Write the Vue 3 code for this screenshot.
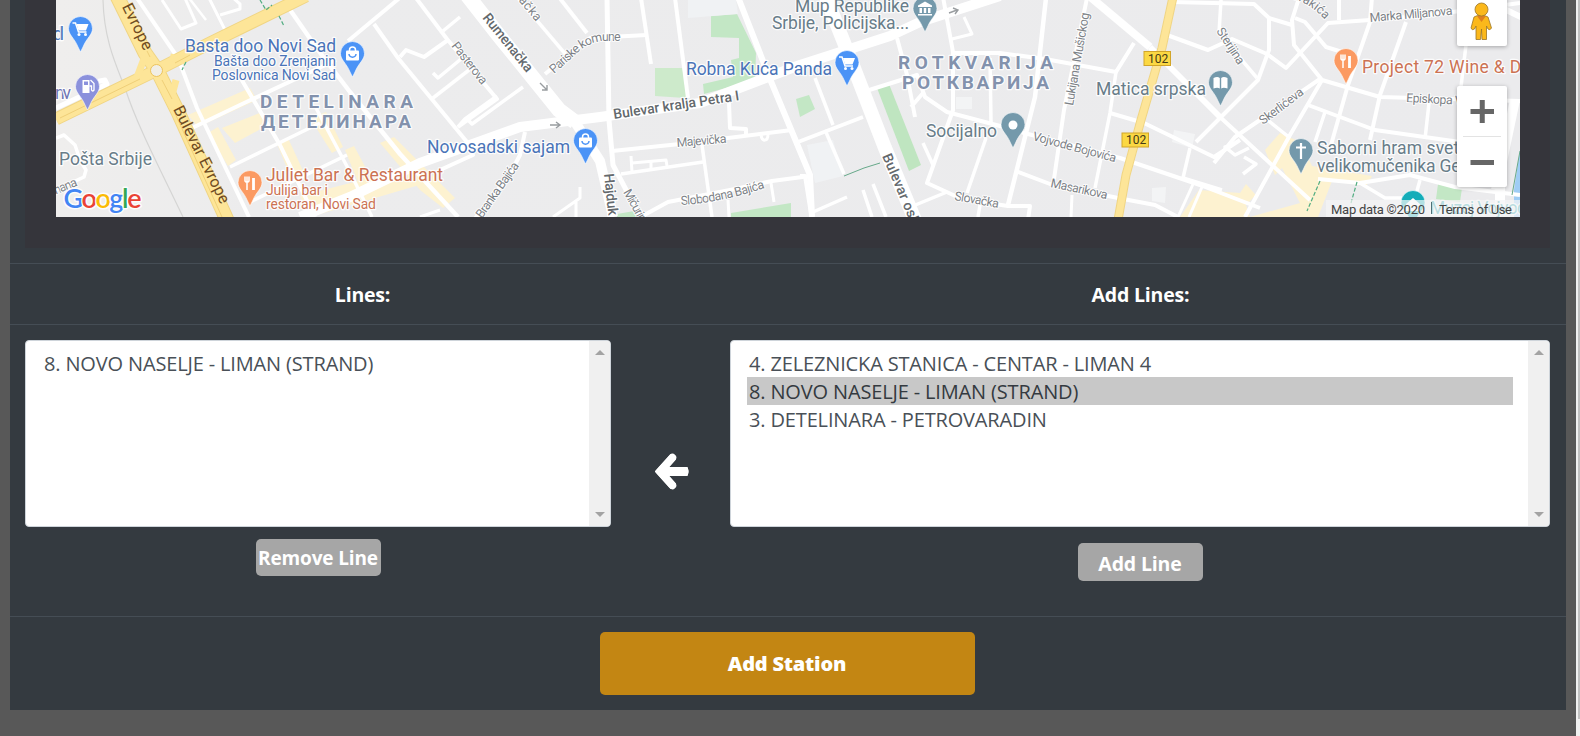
<script setup>
const buildings = [
  ['#fdf2d0', 'M188 115 L250 88 L257 100 L198 127Z'],
  ['#fdf2d0', 'M208 133 L218 127 L236 160 L228 166Z'],
  ['#fdf2d0', 'M222 128 L262 112 L268 125 L235 143Z'],
  ['#fdf2d0', 'M277 144 L288 138 L305 175 L292 180Z'],
  ['#fdf2d0', 'M310 118 L326 112 L343 147 L332 153Z'],
  ['#fdf2d0', 'M380 143 L394 137 L455 198 L443 208 L420 190Z'],
  ['#fdf2d0', 'M300 196 L420 165 L433 181 L310 217Z'],
  ['#fdf2d0', 'M345 150 L354 146 L375 185 L362 192Z'],
  ['#fdf2d0', 'M1265 150 L1280 133 L1300 142 L1312 166 L1372 176 L1366 186 L1332 181 L1318 217 L1180 217 L1199 190 L1240 193 L1246 184 L1262 202 L1277 180Z'],
  ['#ebebed', 'M1282 168 L1300 203 L1250 217 L1246 205Z'],
  ['#c3e7c5', 'M711 16 L737 14 L756 53 L755 80 L704 94 L703 84 L733 77 L731 60 L739 58 L739 38 L711 37Z'],
  ['#cdeacb', 'M655 68 L685 68 L689 93 L685 98 L655 96Z'],
  ['#c3e7c5', 'M796 99 L809 95 L815 109 L800 117Z'],
  ['#bfe5c0', 'M877 88 L889 84 L921 165 L909 171Z'],
  ['#c3e7c5', 'M731 213 L791 203 L791 217 L731 217Z'],
  ['#c3e7c5', 'M617 214 L640 210 L638 217 L617 217Z'],
  ['#c3e7c5', 'M1438 184 L1462 188 L1460 202 L1436 199Z'],
  ['#f0f2f4', 'M688 0 L736 0 L738 14 L688 18Z'],
  ['#f0f2f4', 'M807 145 L833 140 L843 176 L815 183Z'],
  ['#f3f4f5', 'M956 97 L972 97 L972 109 L956 109Z'],
  ['#f3f4f5', 'M1152 188 L1166 187 L1165 203 L1152 201Z'],
  ['#f3f4f5', 'M1174 130 L1195 134 L1192 148 L1172 142Z'],
  ['#9fcdf5', 'M1520 150 L1514 190 L1514 217 L1520 217Z'],
]

// [width, path]
const roads = [
  [4, 'M137 -2 L178 58 L197 108 L249 217'],
  [3, 'M162 0 L181 29 L196 23 L184 -4'],
  [2.5, 'M189 -2 L206 20'], [3, 'M208 -4 L227 34'],
  [3, 'M220 15 L240 9 L240 4 L232 -3'],
  [4.5, 'M286 4 L318 50 L350 92 L400 154 L458 217'],
  [4, 'M402 -4 L348 41'], [4, 'M374 24 L398 58 L467 142 L473 155 L440 170'],
  [4, 'M190 129 L240 105 L336 60'], [3.5, 'M230 167 L320 123'],
  [3.5, 'M250 202 L347 155'], [4, 'M240 77 L280 145 L315 217'],
  [3.5, 'M316 108 L350 172 L372 217'], [3.5, 'M56 138 L64 135 L75 145 L80 160 L86 170 L84 177 L56 190'],
  [5, 'M56 108 L107 84 L105 80 L95 82'],
  [10, 'M300 217 L350 197 L420 163 L520 127 L600 117 L700 103 L800 65 L890 36 L920 22 L1000 -4'],
  [15, 'M467 -5 L500 37 L559 110 L575 122'],
  [10, 'M575 122 L600 161 L613 217'],
  [4, 'M416 -2 L447 39 L497 99 L458 127'], [3.5, 'M460 17 L443 31'],
  [4, 'M448 40 L424 57 L406 50 L400 57'],
  [3.5, 'M433 73 L438 78 L461 59'], [3.5, 'M433 98 L469 70'],
  [3.5, 'M458 127 L465 119 L497 96 M467 119 L472 124 L523 87'],
  [3.5, 'M517 -3 L567 56'], [4, 'M558 -4 L587 33'],
  [4, 'M545 74 L590 38 L647 35'], [4, 'M641 -2 L651 64'],
  [5, 'M607 -2 L609 120 L613 165 L642 220'], [4, 'M675 -2 L688 98'],
  [6, 'M738 -3 L770 79 L810 175 L812 217'],
  [4, 'M729 103 L730 128 L746 129 L746 134'], [4, 'M612 151 L680 144 L792 130'],
  [3.5, 'M621 174 L703 162'], [3.5, 'M702 145 L712 217'],
  [3, 'M631 156 L632 172 M632 163 L666 160 L667 166 M651 162 L651 168'],
  [4, 'M637 219 L668 202 L730 190 L772 181 L810 176'], [3, 'M771 183 L774 202 M728 200 L729 217'],
  [3, 'M761 135 C762 142 768 142 768 134'],
  [4, 'M525 132 L520 155 L510 174 L470 225'], [3, 'M580 187 L580 198 L553 217 M576 202 L576 217 M440 210 L420 217'],
  [14, 'M825 -5 L847 50 L885 148 L915 220'],
  [4, 'M943 -3 L953 52 L953 110 L927 183 L962 199 L1008 206 L1030 206 L1028 220'],
  [3, 'M964 17 L972 34 L952 39'], [4.5, 'M1046 -2 L1035 97 L1008 205'],
  [4, 'M952 53 L1000 53 L1045 59 L1116 72 L1134 43'],
  [4, 'M897 38 L907 75 L915 117 M911 107 L923 93'], [4, 'M866 91 L917 75 L925 97 L947 112 L1000 126 L1028 134 L1120 158 L1200 185 L1260 208'],
  [3.5, 'M990 58 L991 122'], [3.5, 'M986 138 L967 193'], [3.5, 'M923 143 L933 165 M980 205 L978 217'],
  [4, 'M1087 -2 L1064 110 L1054 179'], [8, 'M1088 -5 L1150 47'], [6, 'M1150 47 L1220 117'], [4, 'M1220 117 L1310 200'],
  [3.5, 'M1116 72 L1110 113 L1095 188'], [4, 'M1110 113 L1144 123 L1214 157 L1240 140'],
  [4, 'M1016 171 L1050 184 L1118 198 L1155 205 L1178 217'],
  [3.5, 'M1190 148 L1183 178 L1222 190'], [3, 'M1194 182 L1178 217 M1202 187 L1189 217'],
  [4, 'M1167 35 L1208 50 L1232 39 L1267 54 L1286 68 L1328 23 L1370 20 L1430 15 L1520 3'],
  [4, 'M798 142 L863 117'], [3.5, 'M815 78 L833 125 M825 130 L844 174'], [4, 'M800 176 L805 176 L812 220'],
  [3.5, 'M813 212 L847 197 M863 190 L872 217 M873 184 L886 217 M908 208 L947 192'],
  [3, 'M1072 195 L1071 217'],
  [4, 'M1172 2 L1254 4 L1269 18 L1292 25'], [3.5, 'M1221 0 L1219 33 L1257 78'],
  [4, 'M1269 18 L1269 50 L1258 80 L1210 128 L1196 142'],
  [4, 'M1299 -2 L1292 20 L1294 45 L1322 80 L1380 97 L1520 101'],
  [4, 'M1295 18 L1305 22 L1326 47 L1352 55'],
  [4, 'M1322 80 L1290 135 L1245 217'], [4, 'M1320 79 L1235 137 L1214 163'],
  [4, 'M1370 22 L1348 85 L1331 145'], [4, 'M1406 22 L1380 95 L1370 140'],
  [4, 'M1339 -3 L1339 20 M1372 -3 L1370 22'],
  [4, 'M1308 105 L1375 130 L1460 142'], [3.5, 'M1429 103 L1425 139 M1466 45 L1460 95'],
  [3.5, 'M1325 112 L1315 142 M1265 118 L1290 138'],
  [3.5, 'M1232 146 L1225 147 L1235 155 L1249 148'],
  [4, 'M1318 179 L1360 183 L1410 175 L1455 187 L1520 195'], [3.5, 'M1360 183 L1385 198 L1415 198 L1420 180'],
  [3.5, 'M1244 157 L1256 164 L1243 174'],
  [10, 'M1496 190 L1515 100 M1500 210 L1500 170'], [6, 'M1496 5 L1525 19'],
]

const pins = [
  { x: 80.5, y: 29, c: '#4b93f6', k: 'cart' },
  { x: 87.5, y: 87, c: '#8b91dc', k: 'gas' },
  { x: 352.5, y: 54, c: '#4b93f6', k: 'bag' },
  { x: 250, y: 183, c: '#fb9a62', k: 'food' },
  { x: 585.5, y: 141, c: '#4b93f6', k: 'bag' },
  { x: 925, y: 9, c: '#7499ab', k: 'museum' },
  { x: 847, y: 63, c: '#4b93f6', k: 'cart' },
  { x: 1013, y: 125, c: '#7499ab', k: 'dot' },
  { x: 1220.5, y: 83, c: '#7499ab', k: 'book' },
  { x: 1346, y: 61, c: '#fb9a62', k: 'food' },
  { x: 1301, y: 151, c: '#7499ab', k: 'cross' },
  { x: 1413, y: 203, c: '#14adb9', k: 'home' },
]

// [class, text, x, baseline, length, rotation]
const labels = [
  ['poi blue', 'dl', 53, 40, 11, 0],
  ['poi violet', 'nv', 55, 99, 16, 0],
  ['poi blue', 'Basta doo Novi Sad', 185, 52, 151, 0],
  ['sub blue', 'Bašta doo Zrenjanin', 214, 66, 122, 0],
  ['sub blue', 'Poslovnica Novi Sad', 212, 80, 124, 0],
  ['area', 'DETELINARA', 260, 108, 153, 0],
  ['area', 'ДЕТЕЛИНАРА', 261, 128, 150, 0],
  ['poi grey', 'Pošta Srbije', 59, 165, 93, 0],
  ['street', 'mana', 52, 196, 28, -22],
  ['poi orange', 'Juliet Bar & Restaurant', 266, 181, 177, 0],
  ['sub orange', 'Julija bar i', 266, 195, 62, 0],
  ['sub orange', 'restoran, Novi Sad', 266, 209, 110, 0],
  ['poi blue', 'Novosadski sajam', 427, 153, 143, 0],
  ['avenue', 'Bulevar Evrope', 173, 109, 107, 63.5],
  ['avenue', 'Bulevar Evrope', 95, -47, 110, 63.5],
  ['road', 'Rumenačka', 482, 18, 71, 51],
  ['street', 'Pasterova', 451, 46, 50, 52],
  ['street', 'Kisačka', 506, -14, 47, 50],
  ['road', 'Bulevar kralja Petra I', 614, 119, 127, -8.5],
  ['street', 'Majevička', 677, 147, 50, -5],
  ['street', 'Branka Bajića', 482, 219, 65, -55],
  ['road', 'Hajduk', 604, 174, 42, 84],
  ['street', 'Mičurinova', 623, 192, 52, 61],
  ['poi grey', 'Mup Republike', 795, 12, 114, 0],
  ['poi grey', 'Srbije, Policijska...', 772, 29, 137, 0],
  ['poi blue', 'Robna Kuća Panda', 686, 75, 146, 0],
  ['area', 'ROTKVARIJA', 898, 69, 155, 0],
  ['area', 'РОТКВАРИЈА', 902, 89, 147, 0],
  ['poi grey', 'Socijalno', 926, 137, 71, 0],
  ['street', 'Vojvode Bojovića', 1032, 140, 86, 15],
  ['street', 'Masarikova', 1050, 187, 58, 12],
  ['street', 'Slovačka', 954, 200, 45, 10],
  ['road', 'Bulevar oslob', 882, 156, 88, 67],
  ['street', 'Lukijana Mušickog', 1073, 106, 94, -80],
  ['poi grey', 'Matica srpska', 1096, 95, 110, 0],
  ['street', 'Sterijina', 1216, 31, 41, 57],
  ['street', 'Marka Miljanova', 1370, 22, 83, -5],
  ['street', 'Episkopa Visariona', 1406, 102, 96, 3],
  ['street', 'Skerlićeva', 1263, 125, 52, -37],
  ['poi orange', 'Project 72 Wine & Deli', 1362, 73, 178, 0],
  ['poi grey', 'Saborni hram svetog', 1317, 154, 162, 0],
  ['poi grey', 'velikomučenika Georgija', 1317, 172, 186, 0],
  ['poi teal', 'Muzej Vojvodine', 1430, 214, 118, 0],
]

const assigned = ['8. NOVO NASELJE - LIMAN (STRAND)']
const available = [
  '4. ZELEZNICKA STANICA - CENTAR - LIMAN 4',
  '8. NOVO NASELJE - LIMAN (STRAND)',
  '3. DETELINARA - PETROVARADIN',
]
const picked = 1
</script>

<template>
  <div class="page">
    <main class="card">
      <section class="map-row">
        <div class="map-frame">
          <svg class="map" viewBox="56 0 1464 217" width="1464" height="217">
            <defs>
              <linearGradient id="land" x1="0" x2="1" y1="0" y2="0">
                <stop offset="0" stop-color="#efeeed" />
                <stop offset="0.14" stop-color="#ececed" />
                <stop offset="1" stop-color="#ebebed" />
              </linearGradient>
              <path id="pariske" d="M554 74 L577 53 Q590 41 606 41 L630 41" />
              <path id="slobodana" d="M681 205 Q720 203 768 187" />
              <path id="karadz" d="M1278 -3 Q1306 -3 1327 22" />
            </defs>
            <rect x="56" y="0" width="1464" height="217" fill="url(#land)" />
            <path v-for="(b, i) in buildings" :key="'b' + i" :fill="b[0]" :d="b[1]" />
            <path class="rail" d="M103 0 C104 40 116 65 125 88 C137 125 158 165 183 217" />
            <path v-for="(r, i) in roads" :key="'r' + i" class="way" :stroke-width="r[0]" :d="r[1]" />

            <g class="main-edge">
              <path d="M56 119 L157 70 L210 43 L306 -4" stroke-width="13" />
              <path d="M115 -8 L145 53 L157 70 L178 112 L227 220" stroke-width="15" />
              <path d="M1173 -3 L1162 48 L1141 120 L1126 175 L1118 220" stroke-width="9" />
            </g>
            <g class="main-fill">
              <path d="M56 119 L157 70 L210 43 L306 -4" stroke-width="11" />
              <path d="M115 -8 L145 53 L157 70 L178 112 L227 220" stroke-width="13" />
              <path d="M1173 -3 L1162 48 L1141 120 L1126 175 L1118 220" stroke-width="7" />
              <path d="M136 80 L145 56 M170 57 L185 61 M176 80 L172 95" stroke-width="7" />
            </g>
            <path class="median" d="M60 118 L140 79 M147 51 L150 57 M162 80 L172 99 M175 63 L190 55 M174 111 L222 217" />
            <circle cx="156.500" cy="70.500" r="6" fill="#f1eee5" stroke="#edc45b" />
            <path class="park" d="M260 0 L266 10 L272 5 M279 16 L284 26 M186 62 L182 70 M1320 181 L1307 211 M1357 182 L1351 203" />
            <path d="M844 176 L864 168 L880 163 M1520 151 L1512 195" fill="none" stroke="#67a98a" />
            <path class="flow" d="M540 83 l7 7 M547 85 v5 h-5 M550 125 h9 M556 122 l4 3 -4 3 M949 13 l8 -3 M953 8 l5 2 -3 4" />

            <g v-for="[x, y] in [[1144, 51.5], [1122, 133]]" :key="y">
              <rect :x="x" :y="y" width="26.500" height="14" fill="#fbd843" stroke="#d2a52a" />
              <text class="shield" :x="x + 4" :y="y + 11">102</text>
            </g>

            <text
              v-for="(l, i) in labels" :key="'l' + i" :class="l[0]" :x="l[2]" :y="l[3]"
              :textLength="l[4]" :transform="`rotate(${l[5]} ${l[2]} ${l[3]})`"
            >{{ l[1] }}</text>
            <text class="street"><textPath href="#pariske" textLength="78">Pariske komune</textPath></text>
            <text class="street"><textPath href="#slobodana" textLength="86">Slobodana Bajića</textPath></text>
            <text class="street"><textPath href="#karadz" textLength="54">andrakića</textPath></text>

            <g v-for="(p, i) in pins" :key="'p' + i" :transform="`translate(${p.x} ${p.y})`">
              <path class="pin" :fill="p.c" d="M0 -12.500 A12 12 0 0 1 12 -.5 C12 6 6 9 2.500 18 L0 23 L-2.500 18 C-6 9 -12 6 -12 -.5 A12 12 0 0 1 0 -12.500Z" />
              <g v-if="p.k === 'cart'">
                <path d="M-8 -6 h3 l3 9 h8" fill="none" stroke="#fff" stroke-width="1.500" />
                <path d="M-4 -5 H8 L5.500 1.500 H-2Z" fill="#fff" />
                <circle cx="-1.500" cy="5.500" r="1.500" fill="#fff" /><circle cx="5" cy="5.500" r="1.500" fill="#fff" />
              </g>
              <g v-else-if="p.k === 'gas'">
                <path d="M-5 -7 H2 V6 H-5Z M-3.500 -5.500 V-2 H.5 V-5.500Z" fill="#fff" fill-rule="evenodd" />
                <path d="M3 -7 L6.500 -3.500 V3 Q5 5 4 3 V-1 H2" fill="none" stroke="#fff" stroke-width="1.300" />
              </g>
              <g v-else-if="p.k === 'bag'">
                <rect x="-6.500" y="-3.500" width="13" height="10" rx="1" fill="#fff" />
                <path d="M-3 -3 V-4 A3 3 0 0 1 3 -4 V-3" fill="none" stroke="#fff" stroke-width="1.500" />
                <path d="M-3.500 0 A3.500 3.200 0 0 0 3.500 0" fill="none" :stroke="p.c" stroke-width="1.500" />
              </g>
              <g v-else-if="p.k === 'food'" fill="none" stroke="#fff">
                <path d="M-5 -6.500 V-2 Q-3 .5 -1 -2 V-6.500 M-3 -6.500 V7" stroke-width="1.500" />
                <path d="M3.500 -5 V7" stroke-width="2.800" />
              </g>
              <path v-else-if="p.k === 'museum'" d="M-7 -3.500 L0 -7.500 L7 -3.500 V-2 H-7Z M-5.500 -1 h2.500 V4 h-2.500Z M-1.200 -1 h2.400 V4 h-2.400Z M3 -1 h2.500 V4 H3Z M-7 5 H7 V6.500 H-7Z" fill="#fff" />
              <circle v-else-if="p.k === 'dot'" r="4.500" fill="#fff" />
              <path v-else-if="p.k === 'book'" d="M-7 -5 Q-3 -7 -.7 -5 V5.500 Q-3 4 -7 5.500Z M7 -5 Q3 -7 .7 -5 V5.500 Q3 4 7 5.500Z" fill="#fff" />
              <path v-else-if="p.k === 'cross'" d="M0 -8 V8 M-5 -3.500 H5" stroke="#fff" stroke-width="2.200" />
              <path v-else d="M-7 1 L0 -5 L7 1 V8 H-7Z" fill="#fff" />
            </g>

            <text class="logo" x="63.500" y="207.500" textLength="78">
              <tspan fill="#4285f4">G</tspan><tspan fill="#ea4335">o</tspan><tspan fill="#fbbc05">o</tspan><tspan fill="#4285f4">g</tspan><tspan fill="#34a853">l</tspan><tspan fill="#ea4335">e</tspan>
            </text>

            <rect x="1326" y="200" width="194" height="17" fill="#f5f5f5" fill-opacity="0.7" />
            <text class="credit" x="1331" y="214" textLength="94">Map data ©2020</text>
            <path d="M1431.500 202 V214" stroke="#4f7076" />
            <text class="credit" x="1439" y="214" textLength="73">Terms of Use</text>

            <g class="control">
              <rect x="1457" y="-10" width="50" height="56" rx="2" />
              <rect x="1457" y="86" width="50" height="101" rx="2" />
            </g>
            <path d="M1463 136.500 H1501" stroke="#e3e3e3" />
            <path d="M1470.500 111.500 H1494 M1482.250 100 V123 M1470.500 162.500 H1494" stroke="#666" stroke-width="5" />
            <g fill="#fbb81b" stroke="#9b7527" stroke-width=".8">
              <path d="M1474 17 Q1481 13 1488 17 L1491.500 28 Q1490 31 1488 29 L1486.500 26 V39.500 H1482 L1481.500 29 L1480.500 39.500 H1476 V26 L1474.500 29 Q1472 31 1471 28Z" />
              <path d="M1477 16 L1481.500 22 L1486 16Z" fill="#df7f1d" stroke="none" />
              <circle cx="1481.500" cy="9.500" r="6.500" />
            </g>
          </svg>
        </div>
      </section>

      <div class="heads">
        <h2>Lines:</h2>
        <h2>Add Lines:</h2>
      </div>

      <section class="lists">
        <div class="column left">
          <div class="listbox">
            <ul><li v-for="l in assigned" :key="l">{{ l }}</li></ul>
            <div class="track"><i class="up" /><i class="down" /></div>
          </div>
          <button class="small">Remove Line</button>
        </div>
        <div class="arrow">
          <svg width="34" height="37" viewBox="0 0 34 37">
            <path d="M17.500 4.500 L5 18.500 L17.500 32.500 M7 18.500 H30" fill="none" stroke="#fff" stroke-width="7.500" stroke-linecap="round" stroke-linejoin="round" />
            <path d="M1 18.500 L16 2 L20 6 L12 15 H32 V22 H12 L20 31 L16 35Z" fill="#fff" stroke="#fff" stroke-width="2" stroke-linejoin="round" />
          </svg>
        </div>
        <div class="column right">
          <div class="listbox">
            <ul><li v-for="(l, i) in available" :key="l" :class="{ picked: i === picked }">{{ l }}</li></ul>
            <div class="track"><i class="up" /><i class="down" /></div>
          </div>
          <button class="small add">Add Line</button>
        </div>
      </section>

      <footer class="foot">
        <button class="submit">Add Station</button>
      </footer>
    </main>
    <aside class="page-scroll"><div class="thumb" /></aside>
  </div>
</template>

<style>
body { margin: 0; background: #585858; overflow: hidden; }
</style>

<style scoped>
* { box-sizing: border-box; }
.page { display: flex; justify-content: space-between; width: 1580px; height: 736px; padding-left: 10px; overflow: hidden; background: #585858; font-family: "Open Sans", "Noto Sans", sans-serif; }
.card { width: 1556px; height: 710px; background: #343a40; }
.map-row { height: 263px; padding: 0 16px 15px 15px; }
.map-frame { height: 248px; padding: 0 30px 0 31px; background: #35353b; }
.map { display: block; overflow: hidden; font-family: Roboto, sans-serif; }
.way { fill: none; stroke: #fff; stroke-linejoin: round; }
.rail { fill: none; stroke: #d5d5d4; stroke-width: 1.2; }
.main-edge { fill: none; stroke: #f0d584; }
.main-fill { fill: none; stroke: #fde598; }
.median { fill: none; stroke: #efcf78; stroke-width: 1; }
.park { fill: none; stroke: #52ad82; stroke-width: 1.2; stroke-dasharray: 4 2; }
.flow { fill: none; stroke: #999da0; stroke-width: 1.4; }
text { paint-order: stroke; stroke: #fff; stroke-width: 2.5px; stroke-linejoin: round; stroke-opacity: 0.85; }
.poi { font-size: 17.500px; }
.sub { font-size: 14px; }
.blue { fill: #4a74b8; }
.violet { fill: #6f76b5; }
.grey { fill: #687d89; }
.orange { fill: #cc7253; }
.teal { fill: #2ba2ac; }
.area { font-size: 19px; font-weight: 700; fill: #8392ad; }
.street { font-size: 12.500px; fill: #7d8287; stroke-width: 2px; }
.road { font-size: 14px; font-weight: 500; fill: #64696d; }
.avenue { font-size: 16px; fill: #6f4b22; stroke: #fde598; stroke-width: 1px; }
.shield { font-size: 12px; fill: #443a16; stroke: none; }
.credit { font-size: 13px; fill: #444; stroke: none; }
.logo { font-family: Lato, sans-serif; font-size: 27px; font-weight: 400; stroke-width: 3px; }
.logo tspan { font-weight: 600; }
.pin { stroke: #fff; stroke-width: 0.6; }
.control rect { fill: #fff; filter: drop-shadow(0 1px 2px rgba(0, 0, 0, 0.3)); }

.heads { display: grid; grid-template-columns: 705px 851px; height: 61px; border-top: 1px solid #454d55; }
h2 { margin: 0; color: #fff; font-size: 19.500px; font-weight: 700; line-height: 62px; text-align: center; letter-spacing: -0.2px; }
.lists { display: flex; height: 292px; padding: 15px 16px 0 15px; border-top: 1px solid #454d55; }
.column { display: flex; flex-direction: column; align-items: center; }
.left { width: 586px; gap: 12px; }
.right { width: 820px; gap: 16px; }
.listbox { display: flex; width: 100%; height: 187px; overflow: hidden; border: 1px solid #ced4da; border-radius: 4px; background: #fff; }
ul { flex: 1; margin: 0; padding: 8px 15px 0 16px; list-style: none; }
li { height: 28px; padding-left: 2px; color: #495057; font-size: 20px; line-height: 30px; letter-spacing: -0.15px; white-space: nowrap; }
.picked { background: #c8c8c8; color: #343a40; }
.track { display: flex; flex-direction: column; justify-content: space-between; align-items: center; width: 21px; padding: 9px 0; background: #f0f0f0; }
.up, .down { width: 0; height: 0; border: 5px solid transparent; }
.up { border-top: 0; border-bottom-color: #a3a3a3; }
.down { border-bottom: 0; border-top-color: #a3a3a3; }
.arrow { display: flex; justify-content: center; width: 119px; padding: 113px 0 0 3px; }
button { padding: 0; border: 0; color: #fff; font-family: inherit; font-weight: 700; white-space: nowrap; }
.small { width: 125px; height: 37px; border-radius: 5px; background: #a6a6a6; font-size: 19px; letter-spacing: -0.15px; }
.add { height: 38px; padding-top: 2px; font-size: 19.500px; }
.foot { display: flex; justify-content: center; height: 94px; padding: 15px 2px 0 0; border-top: 1px solid #454d55; }
.submit { width: 375px; height: 63px; border-radius: 5px; background: #c38613; font-size: 20px; font-weight: 800; letter-spacing: -0.2px; }
.page-scroll { width: 4px; height: 736px; padding-left: 2px; background: #f1f1f1; }
.thumb { height: 719px; background: #c1c1c1; }
</style>
